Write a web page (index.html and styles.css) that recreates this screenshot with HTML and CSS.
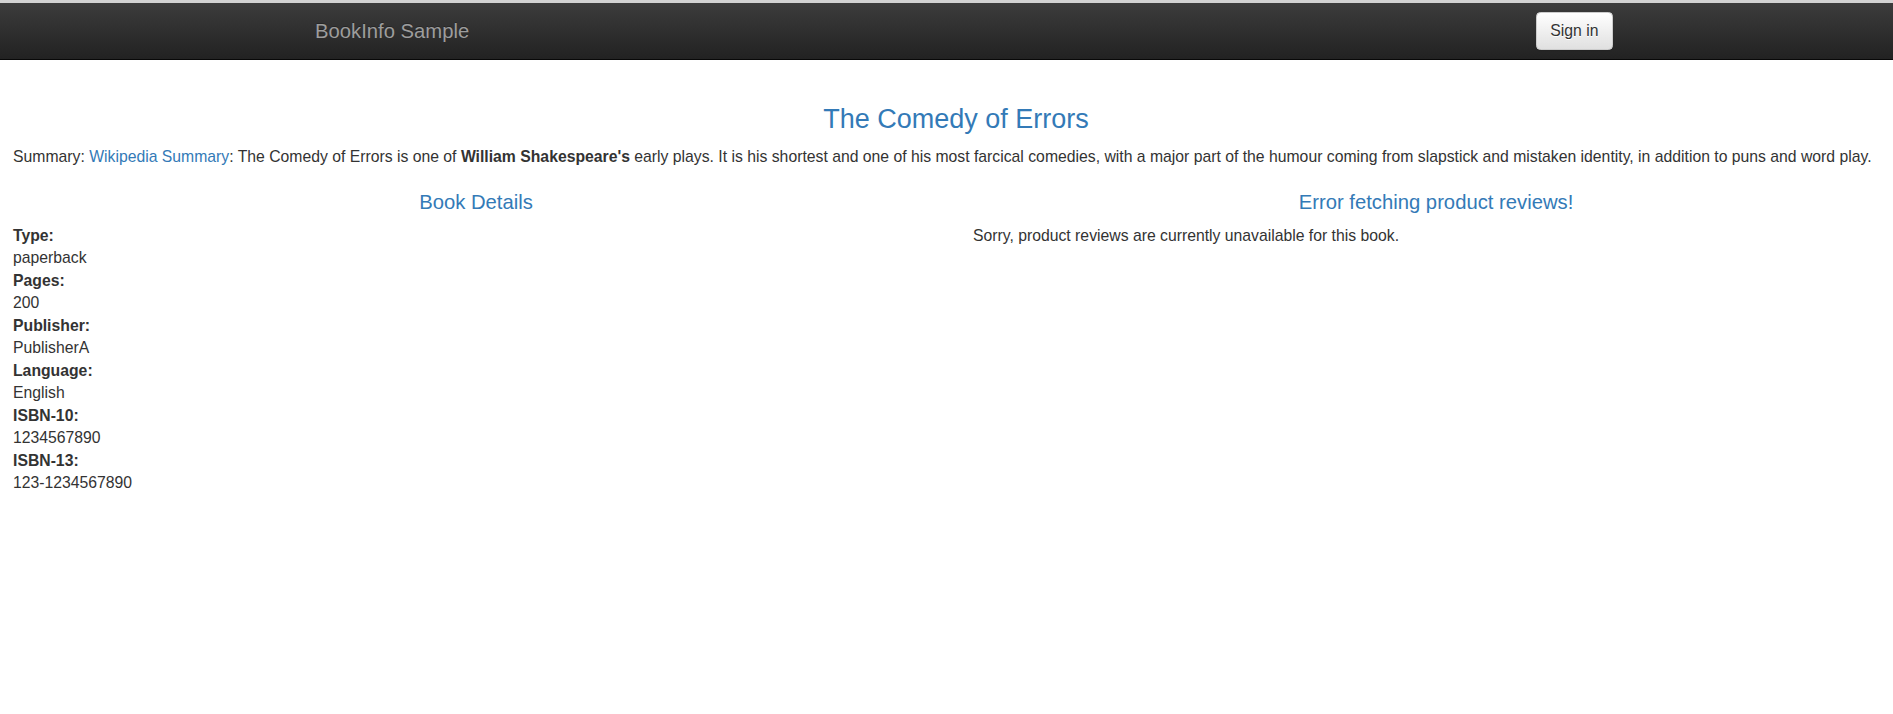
FILE: index.html
```html
<!DOCTYPE html>
<html lang="en">

<head>
    <meta charset="UTF-8">
    <meta name="viewport" content="width=device-width, initial-scale=1.0">
    <title>Simple Bookstore App</title>
    <link rel="stylesheet" href="styles.css">
</head>

<body>
    <nav class="navbar">
        <div class="navbar-inner">
            <a class="navbar-brand" href="#">BookInfo Sample</a>
            <button type="button" class="btn-signin">Sign in</button>
        </div>
    </nav>

    <main class="page">
        <h3 class="book-title">The Comedy of Errors</h3>
        <p class="summary">Summary: <a href="#">Wikipedia Summary</a>: The Comedy of Errors is one of <b>William Shakespeare's</b> early plays. It is his shortest and one of his most farcical comedies, with a major part of the humour coming from slapstick and mistaken identity, in addition to puns and word play.</p>

        <div class="row">
            <div class="col">
                <h4 class="col-title">Book Details</h4>
                <dl class="details">
                    <dt>Type:</dt>
                    <dd>paperback</dd>
                    <dt>Pages:</dt>
                    <dd>200</dd>
                    <dt>Publisher:</dt>
                    <dd>PublisherA</dd>
                    <dt>Language:</dt>
                    <dd>English</dd>
                    <dt>ISBN-10:</dt>
                    <dd>1234567890</dd>
                    <dt>ISBN-13:</dt>
                    <dd>123-1234567890</dd>
                </dl>
            </div>
            <div class="col">
                <h4 class="col-title">Error fetching product reviews!</h4>
                <p class="reviews-error">Sorry, product reviews are currently unavailable for this book.</p>
            </div>
        </div>
    </main>
</body>

</html>
```

FILE: styles.css
```css
body {
    font-family: "Liberation Sans", Arial, sans-serif;
    font-size: 15.75px;
    line-height: 22.5px;
    color: #333;
    margin: 0;
    padding: 0;
    background-color: #fff;
    overflow-x: hidden;
}

a {
    color: #337ab7;
    text-decoration: none;
}

/* dark top bar */
.navbar {
    border-top: 3px solid #d2d2d2;
    border-bottom: 1px solid #080808;
    background-image: linear-gradient(to bottom, #3c3c3c 0, #222 100%);
    height: 56px;
    margin-bottom: 22.5px;
}

.navbar-inner {
    width: 1298px;
    margin-left: 315px;
    height: 100%;
    display: flex;
    justify-content: space-between;
    align-items: center;
}

.navbar-brand {
    color: #9d9d9d;
    font-size: 20.25px;
    line-height: 22.5px;
    text-shadow: 0 -1px 0 rgba(0, 0, 0, 0.25);
}

.btn-signin {
    font-family: "Liberation Sans", Arial, sans-serif;
    font-size: 15.75px;
    line-height: 22.5px;
    color: #333;
    padding: 6.75px 13.5px;
    border: 1px solid #ccc;
    border-radius: 4.5px;
    background-image: linear-gradient(to bottom, #fff 0, #e0e0e0 100%);
    text-shadow: 0 1px 0 #fff;
    box-shadow: inset 0 1px 0 rgba(255, 255, 255, 0.15), 0 1px 1px rgba(0, 0, 0, 0.075);
    cursor: pointer;
}

/* content runs a few px past the right edge, as in the live page */
.page {
    display: flow-root; /* keep the title margin from collapsing into the navbar's */
    padding-left: 13px;
    margin-right: -6px;
}

.book-title {
    font-size: 27px;
    font-weight: normal;
    line-height: 29.7px;
    color: #337ab7;
    text-align: center;
    margin: 22.5px 0 11.25px;
}

.summary {
    margin: 0 0 11.25px;
}

.row {
    display: grid;
    grid-template-columns: 1fr 1fr;
    column-gap: 34px;
}

.col-title {
    font-size: 20.25px;
    font-weight: normal;
    line-height: 22.3px;
    color: #337ab7;
    text-align: center;
    margin: 11.25px 0;
}

.details {
    margin: 0;
}

.details dt {
    font-weight: bold;
}

.details dd {
    margin: 0;
}

.reviews-error {
    margin: 0;
}
```
